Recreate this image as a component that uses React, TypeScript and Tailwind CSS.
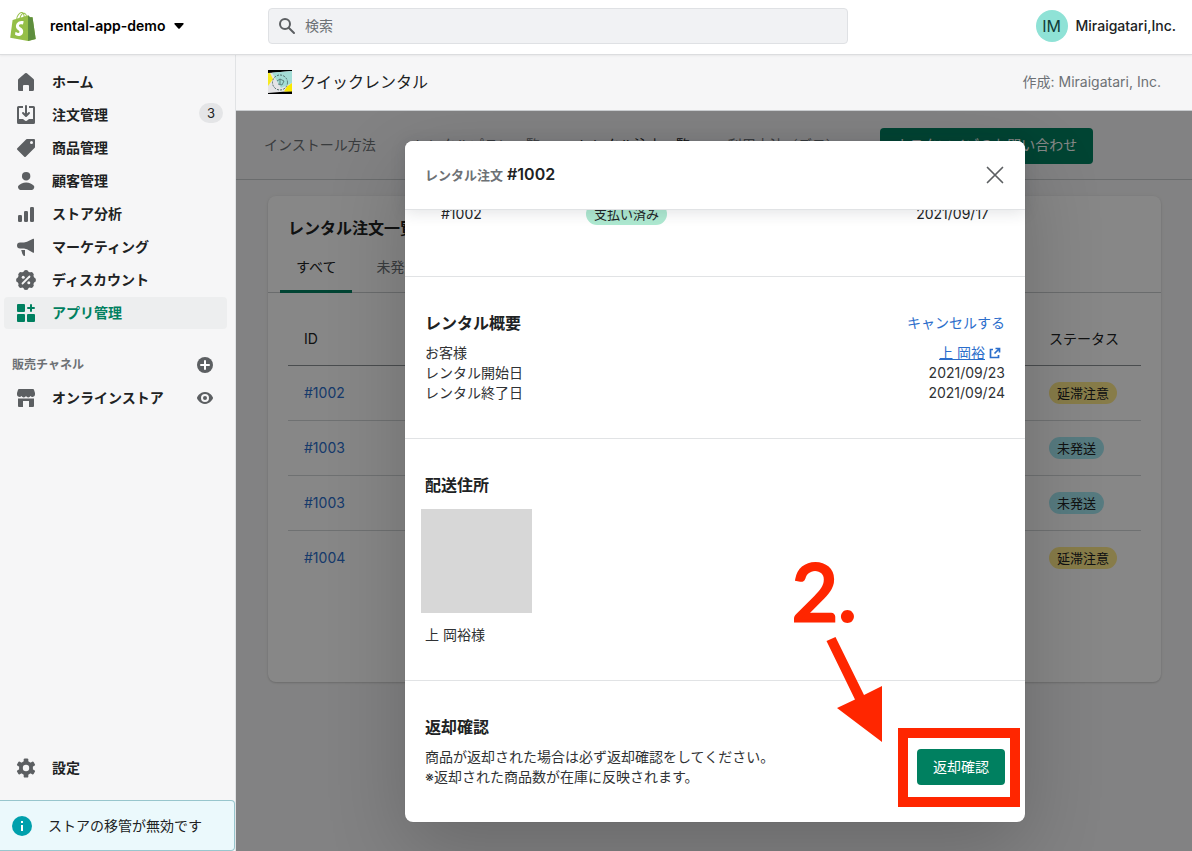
import type { ReactNode } from "react";
import clsx from "clsx";

function Icon({ children }: { children: ReactNode }) {
  return (
    <svg
      width="20"
      height="20"
      viewBox="0 0 20 20"
      fill="currentColor"
      className="shrink-0"
      aria-hidden="true"
    >
      {children}
    </svg>
  );
}

const HomeIcon = () => (
  <Icon>
    <path d="M18 8v9.5a1.5 1.5 0 0 1-1.5 1.5h-3a.5.5 0 0 1-.5-.5V14a1 1 0 0 0-1-1H8a1 1 0 0 0-1 1v4.5a.5.5 0 0 1-.5.5h-3A1.5 1.5 0 0 1 2 17.5V8a1.5 1.5 0 0 1 .5-1.1l6.600-5.600a1.400 1.400 0 0 1 1.800 0l6.600 5.600A1.500 1.500 0 0 1 18 8z" />
  </Icon>
);

const OrdersIcon = () => (
  <Icon>
    <path d="M11 1a1 1 0 1 0-2 0v7.586L7.707 7.293a1 1 0 0 0-1.414 1.414l3 3a1 1 0 0 0 1.414 0l3-3a1 1 0 0 0-1.414-1.414L11 8.586V1z" />
    <path d="M3 14V3h4V1H2.500A1.500 1.500 0 0 0 1 2.500v15A1.500 1.500 0 0 0 2.500 19h15a1.500 1.500 0 0 0 1.500-1.500v-15A1.500 1.500 0 0 0 17.500 1H13v2h4v11h-3.500c-.775 0-1.388.662-1.926 1.244l-.11.12A1.994 1.994 0 0 1 10 16a1.994 1.994 0 0 1-1.463-.637l-.111-.12C7.888 14.664 7.275 14 6.500 14H3z" />
  </Icon>
);

const ProductsIcon = () => (
  <Icon>
    <path
      fillRule="evenodd"
      d="M10.293 1.293A1 1 0 0 1 11 1h7a1 1 0 0 1 1 1v7a1 1 0 0 1-.293.707l-9 9a1 1 0 0 1-1.414 0l-7-7a1 1 0 0 1 0-1.414l9-9zM15.500 6a1.500 1.500 0 1 0 0-3 1.500 1.500 0 0 0 0 3z"
    />
  </Icon>
);

const CustomersIcon = () => (
  <Icon>
    <path d="M14.363 5.220a4.220 4.220 0 1 1-8.439 0 4.220 4.220 0 0 1 8.439 0zM2.670 14.469c1.385-1.090 4.141-2.853 7.474-2.853 3.332 0 6.089 1.764 7.474 2.853.618.486.81 1.308.567 2.056l-.333 1.020A2.110 2.110 0 0 1 15.846 19H4.441a2.110 2.110 0 0 1-2.005-1.455l-.333-1.020c-.245-.748-.052-1.570.567-2.056z" />
  </Icon>
);

const AnalyticsIcon = () => (
  <Icon>
    <rect x="2" y="11" width="4" height="7" rx="1.3" />
    <rect x="8" y="7" width="4" height="11" rx="1.3" />
    <rect x="14" y="3" width="4" height="15" rx="1.3" />
  </Icon>
);

const MarketingIcon = () => (
  <Icon>
    <path d="M18 2.300a.6.6 0 0 0-.9-.5L11 4.700 8 5.500H4a3 3 0 0 0 0 6h4l3 .8 6.100 3.400a.6.6 0 0 0 .9-.5zM5.200 13H9v5.200a.8.8 0 0 1-1.400.5L6.400 17z" />
  </Icon>
);

const DiscountIcon = () => (
  <Icon>
    <circle cx="10" cy="10" r="8.500" />
    {[0, 45, 90, 135, 180, 225, 270, 315].map((angle) => (
      <circle
        key={angle}
        cx="10"
        cy="2.600"
        r="2.500"
        transform={`rotate(${angle} 10 10)`}
      />
    ))}
    <path d="M6.500 13.500l7-7" stroke="#f6f6f7" strokeWidth="1.800" strokeLinecap="round" />
    <circle cx="7.200" cy="7.200" r="1.500" fill="#f6f6f7" />
    <circle cx="12.800" cy="12.800" r="1.500" fill="#f6f6f7" />
  </Icon>
);

const AppsIcon = () => (
  <Icon>
    <rect x="1" y="1" width="8" height="8" rx="1" />
    <rect x="1" y="11" width="8" height="8" rx="1" />
    <rect x="11" y="11" width="8" height="8" rx="1" />
    <path d="M15 2v6M12 5h6" stroke="currentColor" strokeWidth="2" strokeLinecap="round" />
  </Icon>
);

const StoreIcon = () => (
  <Icon>
    <path d="M3 1h14a1 1 0 0 1 .9.6L19 5v1.500a2.500 2.500 0 0 1-4.500 1.500A2.500 2.500 0 0 1 10 8 2.500 2.500 0 0 1 5.500 8 2.500 2.500 0 0 1 1 6.500V5l1.100-3.400A1 1 0 0 1 3 1z" />
    <path d="M2 10.500h16V18a1 1 0 0 1-1 1h-4v-6H7v6H3a1 1 0 0 1-1-1z" />
  </Icon>
);

const SettingsIcon = () => (
  <Icon>
    <circle cx="10" cy="10" r="7" />
    {[0, 60, 120].map((angle) => (
      <rect
        key={angle}
        x="7.700"
        y=".4"
        width="4.600"
        height="19.200"
        rx="1.200"
        transform={`rotate(${angle} 10 10)`}
      />
    ))}
    <circle cx="10" cy="10" r="3.200" fill="#f6f6f7" />
  </Icon>
);

const PlusCircleIcon = () => (
  <Icon>
    <circle cx="10" cy="10" r="8" />
    <path d="M10 6v8M6 10h8" stroke="#fff" strokeWidth="2" strokeLinecap="round" />
  </Icon>
);

const EyeIcon = () => (
  <Icon>
    <path
      fillRule="evenodd"
      d="M17.900 9.400C17.800 9.200 15.400 4 10 4S2.200 9.200 2.100 9.400a1.400 1.400 0 0 0 0 1.200C2.200 10.800 4.600 16 10 16s7.800-5.200 7.900-5.400a1.400 1.400 0 0 0 0-1.200zM10 14a4 4 0 1 1 0-8 4 4 0 0 1 0 8z"
    />
    <circle cx="10" cy="10" r="2" />
  </Icon>
);

const SearchIcon = () => (
  <Icon>
    <g fill="none" stroke="currentColor" strokeWidth="2">
      <circle cx="8" cy="8" r="5" />
      <path d="M11.700 11.700l5.300 5.300" strokeLinecap="round" />
    </g>
  </Icon>
);

const InfoIcon = () => (
  <Icon>
    <circle cx="10" cy="10" r="10" />
    <path d="M9 9h2v6H9zM9 5h2v2H9z" fill="#fff" />
  </Icon>
);

const ExternalIcon = () => (
  <svg width="12" height="12" viewBox="0 0 12 12" fill="none" stroke="currentColor" strokeWidth="1.700" aria-hidden="true">
    <path d="M4 2.500H1.500v8h8V8M6.500 1.500h4v4M10.500 1.500L5.500 6.500" />
  </svg>
);

const ShopifyLogo = () => (
  <svg width="26" height="29" viewBox="0 0 109.5 124.5" aria-hidden="true">
    <path
      fill="#95BF47"
      d="M95.9,23.9c-0.1-0.6-0.6-1-1.1-1c-0.5,0-9.3-0.2-9.3-0.2s-7.4-7.2-8.1-7.9c-0.7-0.7-2.2-0.5-2.7-0.3c0,0-1.4,0.4-3.7,1.1c-0.4-1.3-1-2.8-1.8-4.4c-2.6-5-6.5-7.7-11.1-7.7c-0.3,0-0.6,0-1,0.1c-0.1-0.2-0.3-0.3-0.4-0.5c-2-2.2-4.6-3.2-7.7-3.1c-6,0.2-12,4.5-16.8,12.2c-3.4,5.4-6,12.2-6.7,17.5c-6.9,2.1-11.7,3.6-11.8,3.7c-3.5,1.1-3.6,1.2-4,4.5c-0.3,2.5-9.5,73-9.5,73l76.4,13.2l33.1-8.2C109.5,115.8,96,24.5,95.9,23.9z M67.2,16.8c-1.8,0.5-3.8,1.2-5.9,1.8c0-3-0.4-7.3-1.8-10.9C64,8.6,66.2,13.7,67.2,16.8z M57.2,19.9c-4,1.2-8.4,2.6-12.8,3.9c1.2-4.7,3.6-9.4,6.4-12.5c1.1-1.1,2.6-2.4,4.3-3.2C56.9,11.6,57.3,16.5,57.2,19.9z M49.1,4c1.4,0,2.6,0.3,3.6,0.9c-1.6,0.8-3.2,2.1-4.7,3.6c-3.8,4.1-6.7,10.5-7.9,16.6c-3.6,1.1-7.2,2.2-10.5,3.2C31.7,18.8,39.8,4.3,49.1,4z"
    />
    <path
      fill="#5E8E3E"
      d="M94.8,22.9c-0.5,0-9.3-0.2-9.3-0.2s-7.4-7.2-8.1-7.9c-0.3-0.3-0.6-0.4-1-0.5l0,109.7l33.1-8.2c0,0-13.5-91.3-13.6-92C95.8,23.3,95.3,22.9,94.8,22.9z"
    />
    <path
      fill="#FFFFFF"
      d="M58,39.9l-3.8,14.4c0,0-4.3-2-9.4-1.6c-7.5,0.5-7.5,5.2-7.5,6.4c0.4,6.4,17.3,7.8,18.3,22.9c0.7,11.9-6.3,20-16.4,20.6c-12.2,0.8-18.9-6.4-18.9-6.4l2.6-11c0,0,6.7,5.1,12.1,4.7c3.5-0.2,4.8-3.1,4.7-5.1c-0.5-8.4-14.3-7.9-15.2-21.7c-0.7-11.6,6.9-23.4,23.7-24.4C54.7,38.2,58,39.9,58,39.9z"
    />
  </svg>
);

const AppLogo = () => (
  <svg width="24" height="24" viewBox="0 0 24 24" aria-hidden="true">
    <rect width="24" height="24" fill="#000" />
    <path d="M0 3L24 1v20L0 23z" fill="#e4e4e6" />
    <path d="M4 2.700L24 1v12L13 18z" fill="#a3ddd6" />
    <path d="M0 3h2l3 6-5 7z" fill="#f7ea1e" />
    <path d="M24 13v8.500h-8l3-5z" fill="#f9e900" />
    <g fill="none" stroke="#4d6b68">
      <circle cx="12" cy="12.500" r="7.500" strokeDasharray="2 1.200" />
      <path d="M9 11l3-2 4 2-2 4-4-1M12 9v5" strokeWidth=".8" />
    </g>
  </svg>
);

const navItems = [
  { label: "ホーム", icon: <HomeIcon /> },
  { label: "注文管理", icon: <OrdersIcon />, count: 3 },
  { label: "商品管理", icon: <ProductsIcon /> },
  { label: "顧客管理", icon: <CustomersIcon /> },
  { label: "ストア分析", icon: <AnalyticsIcon /> },
  { label: "マーケティング", icon: <MarketingIcon /> },
  { label: "ディスカウント", icon: <DiscountIcon /> },
  { label: "アプリ管理", icon: <AppsIcon />, active: true },
];

const pageTabs = [
  { label: "インストール方法" },
  { label: "レンタルプラン一覧" },
  { label: "レンタル注文一覧", active: true },
  { label: "利用方法（デモ）" },
];

const orders = [
  { id: "#1002", status: "延滞注意" },
  { id: "#1003", status: "未発送" },
  { id: "#1003", status: "未発送" },
  { id: "#1004", status: "延滞注意" },
];

function Badge({ children, className }: { children: ReactNode; className: string }) {
  return (
    <span className={clsx("inline-block rounded-full px-2 text-[13px] leading-[22px] whitespace-nowrap", className)}>
      {children}
    </span>
  );
}

function TopBar() {
  return (
    <header className="relative z-10 flex h-[55px] shrink-0 items-center border-b border-[#dcdddf] bg-white pb-0.5 shadow-[0_1px_2px_rgba(0,0,0,0.06)]">
      <div className="flex w-[236px] shrink-0 items-center pl-2.5">
        <ShopifyLogo />
        <button type="button" className="ml-3.5 flex items-center gap-2 font-semibold text-black">
          rental-app-demo
          <svg width="10" height="6" viewBox="0 0 10 6" aria-hidden="true">
            <path d="M1 0h8a.7.7 0 0 1 .5 1.200L5.700 5.500a1 1 0 0 1-1.400 0L.5 1.200A.7.7 0 0 1 1 0z" />
          </svg>
        </button>
      </div>
      <div className="flex min-w-0 flex-1 items-center justify-between gap-8 pr-4 pl-8">
        <div className="flex h-9 max-w-[580px] flex-1 items-center gap-2 rounded border border-[#dfe1e4] bg-[#f1f2f4] px-2 text-[#5c5f62]">
          <SearchIcon />
          <input
            type="search"
            aria-label="検索"
            placeholder="検索"
            className="w-full bg-transparent outline-none placeholder:text-[#6d7175]"
          />
        </div>
        <button type="button" className="flex shrink-0 items-center gap-2 font-medium">
          <span className="flex size-8 items-center justify-center rounded-full bg-[#8fe2d6] text-base font-normal text-[#103f3a]">
            IM
          </span>
          Miraigatari,Inc.
        </button>
      </div>
    </header>
  );
}

function Sidebar() {
  return (
    <aside className="flex w-[236px] shrink-0 flex-col border-r border-[#e1e3e5] bg-[#f6f6f7] pt-[11px]">
      <nav className="flex flex-1 flex-col pr-2 pl-1 font-semibold">
        <ul className="flex flex-col gap-px">
          {navItems.map((item) => (
            <li key={item.label}>
              <a
                href="#"
                className={clsx(
                  "flex h-8 items-center gap-4 rounded pr-1 pl-3",
                  item.active ? "bg-[#edeeef] text-[#008060]" : "text-[#5c5f62]",
                )}
              >
                {item.icon}
                <span className={clsx("flex-1", !item.active && "text-[#202223]")}>{item.label}</span>
                {item.count && (
                  <span className="mb-1 rounded-full bg-[#e4e5e7] px-2 text-[13px] font-normal text-[#202223]">
                    {item.count}
                  </span>
                )}
              </a>
            </li>
          ))}
        </ul>
        <div className="mt-5 flex h-8 items-center justify-between pr-3 pl-2 text-[#5c5f62]">
          <h2 className="text-xs text-[#6d7175]">販売チャネル</h2>
          <button type="button" aria-label="販売チャネルを追加">
            <PlusCircleIcon />
          </button>
        </div>
        <a href="#" className="mt-px flex h-8 items-center gap-4 pr-3 pl-3 text-[#5c5f62]">
          <StoreIcon />
          <span className="flex-1 text-[#202223]">オンラインストア</span>
          <EyeIcon />
        </a>
        <a href="#" className="mt-auto mb-4 flex h-8 items-center gap-4 pl-3 text-[#5c5f62]">
          <SettingsIcon />
          <span className="text-[#202223]">設定</span>
        </a>
      </nav>
      <div className="flex h-[51px] items-center gap-4 rounded-r border border-l-0 border-[#98c6cd] bg-[#ebf9fc] pl-3 text-[#00a0ac]">
        <InfoIcon />
        <span className="text-[#202223]">ストアの移管が無効です</span>
      </div>
    </aside>
  );
}

function OrdersPage() {
  return (
    <div className="h-full">
      <div className="flex h-[69px] items-center border-b border-[#c9cccf] pt-0.5 pl-7 whitespace-nowrap">
        <nav className="flex gap-[38px] pb-0.5 text-[#6d7175]">
          {pageTabs.map((tab) => (
            <a key={tab.label} href="#" className={clsx(tab.active && "text-[#202223]")}>
              {tab.label}
            </a>
          ))}
        </nav>
        <button type="button" className="ml-10 h-9 rounded bg-[#008060] px-4 pb-0.5 text-white">
          カスタマイズのお問い合わせ
        </button>
      </div>
      <section className="mt-4 mr-[31px] ml-8 h-[486px] rounded-lg bg-white shadow-[0_0_5px_rgba(23,24,24,0.05),0_1px_2px_rgba(0,0,0,0.15)]">
        <h2 className="px-5 pt-5 text-base leading-6 font-semibold">レンタル注文一覧</h2>
        <div className="flex h-[53px] gap-2 border-b border-[#c9cccf] px-3">
          <button type="button" className="-mb-px border-b-[3px] border-[#008060] px-4 pt-1">
            すべて
          </button>
          <button type="button" className="-mb-px border-b-[3px] border-transparent px-4 pt-1 text-[#6d7175]">
            未発送
          </button>
        </div>
        <div className="px-5 pt-[17px]">
          <table className="w-full text-left">
            <thead>
              <tr className="h-[55px] border-b border-[#8c9196]">
                <th className="px-4 pt-1 font-normal">ID</th>
                <th className="w-[108px] px-4 pt-1 font-normal whitespace-nowrap">ステータス</th>
              </tr>
            </thead>
            <tbody>
              {orders.map((order, i) => (
                <tr key={i} className="h-[55px] border-b border-[#d2d5d8] last:border-b-0">
                  <td className="px-4">
                    <a href="#" className="text-[#2c6ecb]">
                      {order.id}
                    </a>
                  </td>
                  <td className="px-4">
                    <Badge className={order.status === "未発送" ? "bg-[#a4e8f2]" : "bg-[#ffea8a]"}>
                      {order.status}
                    </Badge>
                  </td>
                </tr>
              ))}
            </tbody>
          </table>
        </div>
      </section>
    </div>
  );
}

function OrderModal() {
  return (
    <div
      role="dialog"
      aria-labelledby="order-title"
      className="relative flex w-[620px] flex-col rounded-lg bg-white shadow-[0_26px_80px_rgba(0,0,0,0.2),0_0_1px_rgba(0,0,0,0.2)]"
    >
      <div className="relative z-10 flex h-[69px] shrink-0 items-center justify-between rounded-t-lg border-b border-[#e1e3e5] bg-white px-5 shadow-[0_2px_16px_rgba(33,43,54,0.14)]">
        <h1 id="order-title" className="flex items-baseline gap-1 pb-0.5 text-base font-semibold">
          <span className="text-[13px] text-[#6d7175]">レンタル注文</span>
          #1002
        </h1>
        <button type="button" aria-label="閉じる" className="text-[#5c5f62]">
          <svg width="20" height="20" viewBox="0 0 20 20" stroke="currentColor" strokeWidth="1.700" strokeLinecap="round">
            <path d="M2.500 2.500l15 15M17.500 2.500l-15 15" />
          </svg>
        </button>
      </div>

      {/* scrolled to the end, so the first row slides under the header */}
      <div className="flex min-h-0 flex-1 flex-col justify-end overflow-hidden rounded-b-lg">
        <section className="grid h-[75px] shrink-0 grid-cols-[145px_1fr_auto] items-start border-b border-[#e1e3e5] px-9">
          <span className="leading-6">#1002</span>
          <span className="flex pt-px">
            <Badge className="bg-[#aee9d1]">支払い済み</Badge>
          </span>
          <span className="leading-6">2021/09/17</span>
        </section>

        <section className="shrink-0 border-b border-[#e1e3e5] px-5 pt-[34px] pb-[35px]">
          <div className="mb-2 flex items-center justify-between">
            <h2 className="text-base leading-6 font-semibold">レンタル概要</h2>
            <button type="button" className="text-[#2c6ecb]">
              キャンセルする
            </button>
          </div>
          <dl className="grid grid-cols-[1fr_auto] text-[#303234]">
            <dt>お客様</dt>
            <dd className="flex items-center justify-end gap-1 pr-1 text-[#2c6ecb]">
              <a href="#" className="underline">
                上 岡裕
              </a>
              <ExternalIcon />
            </dd>
            <dt>レンタル開始日</dt>
            <dd className="text-right">2021/09/23</dd>
            <dt>レンタル終了日</dt>
            <dd className="text-right">2021/09/24</dd>
          </dl>
        </section>

        <section className="shrink-0 border-b border-[#e1e3e5] px-5 pt-[34px] pb-[35px]">
          <h2 className="text-base leading-6 font-semibold">配送住所</h2>
          <div className="my-3 -ml-1 h-[104px] w-[111px] bg-[#d7d7d7]" />
          <p className="text-[#303234]">上 岡裕様</p>
        </section>

        <section className="shrink-0 px-5 pt-[34px] pb-[35px]">
          <h2 className="mb-2 text-base leading-6 font-semibold">返却確認</h2>
          <div className="flex items-center justify-between">
            <p className="text-[#303234]">
              商品が返却された場合は必ず返却確認をしてください。
              <br />
              ※返却された商品数が在庫に反映されます。
            </p>
            <div className="relative">
              <button type="button" className="block h-9 rounded bg-[#008060] px-4 text-white">
                返却確認
              </button>
              <div className="pointer-events-none absolute -top-[21px] -right-[15px] -bottom-[22px] -left-[19px] border-[10px] border-[#ff2600]" />
            </div>
          </div>
        </section>
      </div>

      <span className="pointer-events-none absolute right-[168px] bottom-[184px] font-['Lato',sans-serif] text-[80px] leading-[96px] font-normal text-[#ff2600] [-webkit-text-stroke:3px_#ff2600]">
        2.
      </span>
      <svg
        width="56"
        height="106"
        viewBox="0 0 56 106"
        className="pointer-events-none absolute right-[143px] bottom-20"
        aria-hidden="true"
      >
        <polygon points="0.5,5 9.500,1 38,59 56,50 56,106 11,72 29,63.500" fill="#ff2600" />
      </svg>
    </div>
  );
}

export default function App() {
  return (
    <div className="flex h-screen flex-col overflow-hidden bg-[#f6f6f7] font-[Inter,'Noto_Sans_CJK_JP',sans-serif] text-sm leading-5 text-[#202223]">
      <TopBar />
      <div className="flex min-h-0 flex-1">
        <Sidebar />
        <main className="flex min-w-0 flex-1 flex-col">
          <div className="flex h-14 shrink-0 items-center gap-2 border-b border-[#c9cccf] pr-[31px] pb-0.5 pl-8">
            <AppLogo />
            <span className="flex-1 text-base">クイックレンタル</span>
            <span className="text-[#6d7175]">作成: Miraigatari, Inc.</span>
          </div>
          <div className="relative min-h-0 flex-1 overflow-hidden">
            <OrdersPage />
            <div className="absolute inset-0 flex justify-center bg-black/47 pt-[30px] pb-[29px] pl-0.5">
              <OrderModal />
            </div>
          </div>
        </main>
      </div>
    </div>
  );
}
